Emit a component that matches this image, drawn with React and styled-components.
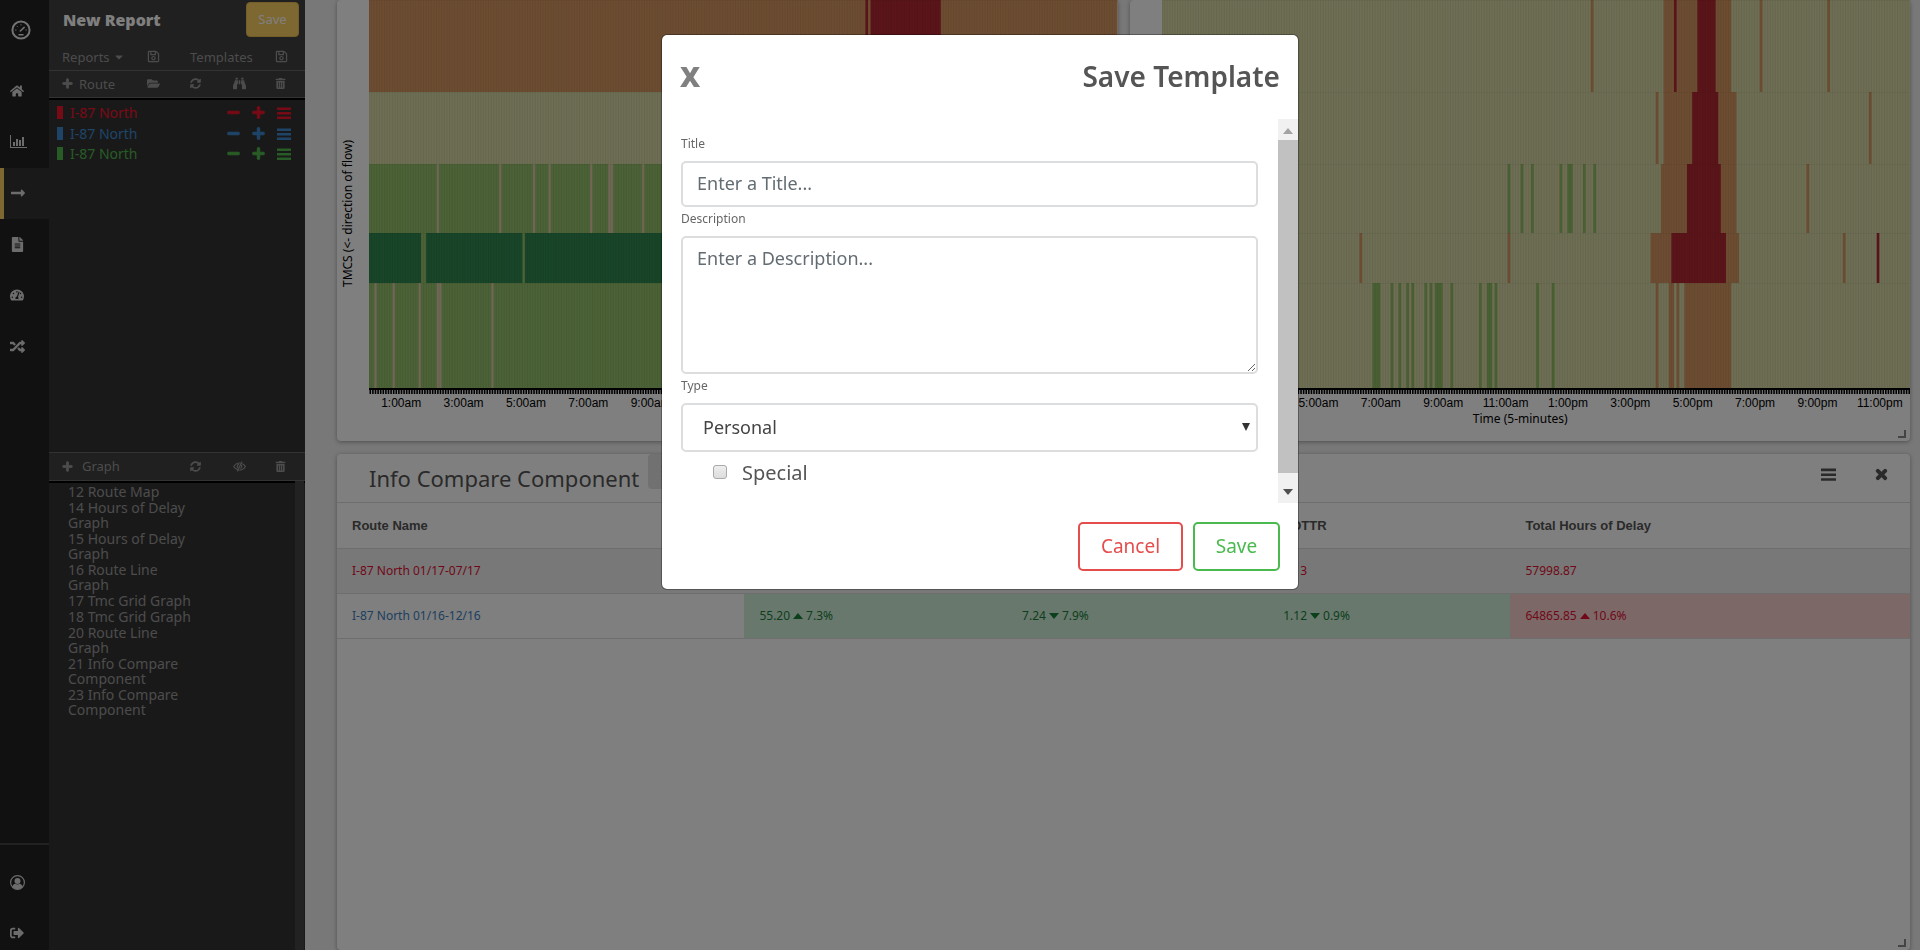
import React from "react";
import styled, { createGlobalStyle } from "styled-components";
import {
  FaBars, FaBinoculars, FaCaretDown, FaFileAlt, FaFolderOpen, FaHome,
  FaLongArrowAltRight, FaMinus, FaPlus, FaRandom, FaRegSave, FaSignOutAlt, FaSyncAlt,
  FaTachometerAlt, FaTimes, FaTrashAlt,
} from "react-icons/fa";

const GlobalStyle = createGlobalStyle`
  *, *::before, *::after { box-sizing: border-box; }
  body {
    margin: 0;
    overflow: hidden;
    font-family: "Noto Sans", "Liberation Sans", sans-serif;
    font-size: 14px;
    color: #555;
    background: #f0f0f0;
  }
  button, input, select, textarea { font-family: inherit; margin: 0; }
  h1, h2, ul, p { margin: 0; padding: 0; }
  svg { display: block; }
`;

const Shell = styled.div`
  display: flex;
  height: 100vh;
`;

/* ---------- icon rail ---------- */

const Rail = styled.nav`
  flex: 0 0 49px;
  display: flex;
  flex-direction: column;
  overflow: hidden;
  background: #222;
`;

const Brand = styled.a`
  flex: 0 0 66px;
  padding: 20px 0 0 11px;
  color: #e6e6e6;
`;

const RailLink = styled.a`
  flex: 0 0 51px;
  display: flex;
  align-items: center;
  padding-bottom: 1px;
  padding-left: ${(p) => (p.$active ? 6 : 10)}px;
  border-left: ${(p) => (p.$active ? "4px solid #f8d060" : "none")};
  background: ${(p) => (p.$active ? "#333" : "transparent")};
  color: #d8d8d8;
  font-size: 14px;
`;

const RailFoot = styled.div`
  flex: 0 0 107px;
  display: flex;
  flex-direction: column;
  min-height: 0;
  margin-top: auto;
  padding-top: 12px;
  border-top: 2px solid #444;
`;

/* ---------- report panel ---------- */

const Panel = styled.aside`
  flex: 0 0 256px;
  display: flex;
  flex-direction: column;
  background: #333;
`;

const PanelHead = styled.header`
  flex: 0 0 44px;
  display: flex;
  align-items: flex-start;
  justify-content: space-between;
  padding: 2px 6px 0 14px;
  background: #404040;
`;

const PanelTitle = styled.h1`
  font-size: 16px;
  line-height: 37px;
  font-weight: 900;
  color: #fff;
`;

const GoldButton = styled.button`
  width: 53px;
  height: 35px;
  padding: 0 0 2px;
  border: 1px solid #e6bd50;
  border-radius: 4px;
  background: #fbd062;
  color: #fff;
  font-size: 13px;
`;

const ToolRow = styled.div`
  flex: 0 0 ${(p) => (p.$tall ? 29 : 27)}px;
  display: grid;
  grid-template-columns: repeat(6, 1fr);
  align-items: center;
  padding-bottom: 1px;
  border-top: ${(p) => (p.$top ? "1px solid #666" : "none")};
  border-bottom: 1px solid #666;
  box-shadow: ${(p) => (p.$last ? "0 2px 0 #000" : "none")};
  background: #404040;
`;

const Tool = styled.button`
  grid-column: ${(p) => p.$col || "auto"};
  display: flex;
  align-items: center;
  gap: ${(p) => p.$gap || 0}px;
  padding: 0 0 0 13px;
  border: 0;
  background: none;
  color: #999;
  font-size: 13px;
  line-height: 20px;
  white-space: nowrap;
`;

const RouteList = styled.ul`
  flex: 0 0 354px;
  padding-top: 4px;
  list-style: none;
`;

const RouteItem = styled.li`
  display: flex;
  align-items: center;
  height: 21px;
  margin-bottom: ${(p) => (p.$tight ? 0 : -1)}px;
  padding: 0 14px 0 8px;
  color: ${(p) => p.$color};
  font-size: 14px;
`;

const Swatch = styled.span`
  width: 6px;
  height: 13px;
  margin-right: 7px;
  background: currentColor;
`;

const RouteName = styled.span`
  flex: 1;
`;

const RouteAction = styled.button`
  margin-left: 12px;
  padding: 0;
  border: 0;
  background: none;
  color: inherit;
  font-size: 13px;
`;

const GraphArea = styled.div`
  flex: 1;
  display: flex;
  justify-content: space-between;
  min-height: 0;
  padding-right: 1px;
`;

const GraphList = styled.ul`
  display: flex;
  flex-direction: column;
  gap: 1px;
  width: 150px;
  padding: 3px 0 0 19px;
  list-style: none;
  font-size: 14px;
  line-height: 15px;
  color: #999;
`;

const GraphTrack = styled.div`
  width: 9px;
  background: #454545;
`;

/* ---------- main area ---------- */

const Main = styled.main`
  flex: 1;
  display: flex;
  flex-direction: column;
  gap: 13px;
  min-width: 0;
  padding: 0 10px 0 32px;
  background: #f0f0f0;
`;

const ChartGrid = styled.div`
  display: grid;
  grid-template-columns: 1fr 1fr;
  gap: 12px;
`;

const Card = styled.section`
  position: relative;
  border-radius: 4px;
  background: #fff;
  box-shadow: 0 1px 4px rgba(0, 0, 0, 0.35);
`;

const ChartCard = styled(Card)`
  display: flex;
  height: 441px;
`;

const AxisTitleY = styled.div`
  flex: 0 0 32px;
  display: flex;
  align-items: flex-start;
  padding: 140px 0 0 2px;
  line-height: 18px;
  font-size: 12px;
  color: #000;

  span {
    writing-mode: vertical-rl;
    rotate: 180deg;
    white-space: nowrap;
  }
`;

const Plot = styled.div`
  flex: 1;
  min-width: 0;
`;

const Heat = styled.svg`
  width: 100%;
  height: 394px;
`;

const TimeLabels = styled.div`
  display: grid;
  grid-template-columns: repeat(12, 1fr);
  margin-right: -1px;
  padding-left: 1px;
  font-family: "Liberation Sans", sans-serif;
  font-size: 12px;
  line-height: 18px;
  color: #000;
  text-align: center;
`;

const AxisTitleX = styled.p`
  padding-right: 31px;
  font-size: 12px;
  line-height: 14px;
  text-align: center;
  color: #000;
`;

const Grip = styled.span`
  position: absolute;
  right: 4px;
  bottom: 3px;
  width: 8px;
  height: 8px;
  border-right: 2px solid #888;
  border-bottom: 2px solid #888;
`;

const InfoCard = styled(Card)`
  flex: 1;
`;

const InfoHead = styled.header`
  display: flex;
  height: 49px;
  padding: 0 21px 0 32px;
  border-bottom: 1px solid #ddd;
`;

const InfoTitle = styled.h2`
  font-size: 22px;
  line-height: 48px;
  font-weight: 400;
  color: #555;
`;

const Badge = styled.button`
  width: 44px;
  height: 35px;
  margin-left: 9px;
  padding: 0 0 0 13px;
  border: 0;
  border-radius: 4px;
  background: #e2e2e2;
  color: #e41a1c;
`;

const HeadActions = styled.div`
  display: flex;
  gap: 38px;
  height: 40px;
  align-items: center;
  margin-left: auto;
`;

const PlainIcon = styled.button`
  padding: 0;
  border: 0;
  background: none;
  color: #555;
  font-size: 15px;
`;

const InfoTable = styled.table`
  width: 100%;
  border-collapse: collapse;
  table-layout: fixed;
  font-size: 12px;
`;

const Th = styled.th`
  width: ${(p) => p.$width};
  height: 45px;
  padding: 0 15px;
  border-bottom: 1px solid #ddd;
  font-family: "Liberation Sans", sans-serif;
  font-size: 13px;
  text-align: left;
  color: #555;
`;

const tones = { good: "#d2f0da", bad: "#fad0d0" };
const inks = { good: "#18803a", bad: "#e01030", red: "#e01030", blue: "#3a80c0" };

const Td = styled.td`
  height: 45px;
  padding: 0 15px;
  border-bottom: 1px solid #ddd;
  background: ${(p) => tones[p.$tone] || (p.$shade ? "#f0f0f0" : "transparent")};
  color: ${(p) => inks[p.$ink]};
`;

const Change = styled.span`
  display: inline-flex;
  align-items: center;
  gap: 3px;
`;

/* ---------- dialog ---------- */

const Backdrop = styled.div`
  position: fixed;
  inset: 0;
  padding-top: 34px;
  padding-left: 40px;
  background: rgba(0, 0, 0, 0.5);
`;

const Dialog = styled.form`
  width: 100%;
  max-width: 638px;
  margin: 0 auto;
  border: 1px solid rgba(0, 0, 0, 0.3);
  border-radius: 6px;
  background: #fff;
  background-clip: padding-box;
`;

const DialogHead = styled.header`
  display: flex;
  justify-content: space-between;
  align-items: center;
  height: 84px;
  padding: 0 18px 2px;
`;

const CloseButton = styled.button`
  padding: 0;
  border: 0;
  background: none;
  color: #808080;
  font-size: 28px;
  line-height: 36px;
  font-weight: 900;
`;

const DialogTitle = styled.h2`
  font-size: 28px;
  line-height: 40px;
  font-weight: 600;
  color: #555;
`;

const DialogBody = styled.div`
  display: flex;
  height: 384px;
`;

const Fields = styled.div`
  flex: 1;
  padding: 13px 20px 0 19px;
`;

const FieldLabel = styled.label`
  display: block;
  font-size: 12px;
  line-height: 24px;
  padding-bottom: 5px;
  color: #666;
`;

const control = `
  display: block;
  width: 100%;
  border: 2px solid #dcdddf;
  border-radius: 5px;
  background: #fff;
  color: #444;
  font-size: 18px;
`;

const TextInput = styled.input`
  ${control}
  height: 46px;
  padding: 0 14px 2px;
  &::placeholder { color: #636c72; opacity: 1; }
`;

const TextArea = styled.textarea`
  ${control}
  height: 138px;
  padding: 7px 14px;
  line-height: 26px;
  resize: vertical;
  &::placeholder { color: #636c72; opacity: 1; }
`;

const SelectWrap = styled.div`
  position: relative;

  &::after {
    content: "";
    position: absolute;
    right: 8px;
    top: 20px;
    border: 4px solid transparent;
    border-top: 8px solid #333;
    border-bottom: 0;
    pointer-events: none;
  }
`;

const Select = styled.select`
  ${control}
  height: 49px;
  padding: 0 20px 2px;
  appearance: none;
`;

const CheckRow = styled.label`
  display: flex;
  align-items: center;
  gap: 15px;
  height: 40px;
  padding-left: 32px;
  font-size: 20px;
  color: #555;
`;

const CheckBox = styled.input`
  width: 14px;
  height: 14px;
  appearance: none;
  border: 1px solid #aaa;
  border-radius: 3px;
  background: linear-gradient(#eee, #ddd);
`;

const ScrollTrack = styled.div`
  flex: 0 0 20px;
  display: flex;
  flex-direction: column;
  background: #f1f1f1;
`;

const ScrollArrow = styled.span`
  flex: 0 0 ${(p) => (p.$down ? 30 : 21)}px;
  display: grid;
  place-items: center;
  padding-top: ${(p) => (p.$down ? 8 : 2)}px;
  color: ${(p) => (p.$down ? "#505050" : "#a3a3a3")};
`;

const ScrollThumb = styled.div`
  flex: 1;
  background: #c1c1c1;
`;

const DialogFoot = styled.footer`
  display: flex;
  justify-content: flex-end;
  gap: 10px;
  padding: 19px 18px 18px;
`;

const OutlineButton = styled.button`
  height: 49px;
  width: ${(p) => p.$width}px;
  padding: 0 0 2px;
  border: 2px solid ${(p) => p.$color};
  border-radius: 5px;
  background: #fff;
  color: ${(p) => p.$color};
  font-size: 19px;
`;

/* ---------- drawings ---------- */

const bold = (Icon) => styled(Icon)`
  overflow: visible;
  stroke: currentColor;
  stroke-width: 40px;
`;
const BoldPlus = bold(FaPlus);
const BoldMinus = bold(FaMinus);
const BoldTimes = bold(FaTimes);

const MenuIcon = ({ size = 14 }) => (
  <svg width={size} height={size - 2} viewBox="0 0 14 12" fill="currentColor">
    <path d="M0 0.5h14v2.4H0zM0 5h14v2.4H0zM0 9.5h14v2.4H0z" />
  </svg>
);

const GaugeIcon = () => (
  <svg width="20" height="20" viewBox="0 0 20 20" fill="none" stroke="currentColor" strokeLinecap="round">
    <circle cx="10" cy="10" r="8.6" strokeWidth="2" />
    <path d="M9.3 11 L13.2 7.4" strokeWidth="1.5" />
    <path d="M8 14.7 H12" strokeWidth="1.5" />
    <path d="M4.6 10 H5 M6.2 6.4 L6.4 6.6 M10 4.7 V5 M15 10 H15.4" strokeWidth="1" />
  </svg>
);

const BarsIcon = () => (
  <svg width="17" height="14" viewBox="0 0 17 14" fill="currentColor">
    <path d="M0 0h1v12h16v1H0z" />
    <path d="M3 7h2v4H3zM6 4h2v7H6zM9 5h2v6H9zM12 2h2v9h-2z" />
  </svg>
);

const UserIcon = () => (
  <svg width="15" height="15" viewBox="0 0 15 15">
    <circle cx="7.5" cy="7.5" r="6.9" fill="none" stroke="currentColor" strokeWidth="1.2" />
    <circle cx="7.5" cy="6" r="3" fill="currentColor" />
    <path d="M2.2 12 C2.8 9.6 4.2 8.8 5.5 8.7 C6.8 9.6 8.2 9.6 9.5 8.7 C10.8 8.8 12.2 9.6 12.8 12 C9.8 15 5.2 15 2.2 12z" fill="currentColor" />
  </svg>
);

const EyeIcon = () => (
  <svg width="13" height="11" viewBox="0 0 13 11" fill="none" stroke="currentColor" strokeWidth="1.2" strokeLinecap="round">
    <path d="M5.2 9 C3 8.5 1.6 7 .7 5.5 C2 3.4 4 2 6.5 2 H7.2" />
    <path d="M9.8 2.9 C11 3.6 11.8 4.5 12.3 5.5 C11.2 7.6 9.2 9 6.8 9.1" />
    <path d="M8.8 1 L4.6 10" />
    <path d="M4.6 6.7 C3.8 5.4 4.4 3.9 5.6 3.4 M8.6 4.3 C9 5.6 8.6 6.6 7.8 7.2" />
  </svg>
);

const Triangle = ({ down, size = 10 }) => (
  <svg width={size} height="6" viewBox="0 0 10 6" fill="currentColor">
    <path d={down ? "M0 0H10L5 6z" : "M0 6H10L5 0z"} />
  </svg>
);

const C = { orange: "#da9b65", light: "#dcdda9", green: "#98c46e", moss: "#94c268", deep: "#328b52", red: "#b62a34", tan: "#dcd0a8" };
const bands = [[0, 92], [92, 72], [164, 69], [233, 50], [283, 105]];

/* each cell is one five-minute slot: [first slot, slot count, colour] */
const leftMap = [
  { base: C.orange, cells: [[191, 1, C.red], [193, 27, C.red]] },
  { base: C.light, cells: [] },
  { base: C.green, cells: [[26, 1, C.tan], [50, 1, C.tan], [63, 1, C.tan], [69, 1, C.tan], [85, 1, C.tan], [92, 2, C.tan], [105, 1, C.tan]] },
  { base: C.deep, cells: [[20, 2, C.green], [59, 1, C.green]] },
  { base: C.green, cells: [[2, 1, C.tan], [9, 1, C.tan], [19, 1, C.tan], [26, 2, C.tan], [47, 1, C.tan]] },
];

const rightMap = [
  { base: C.light, cells: [[165, 1, C.orange], [193, 26, C.orange], [197, 1, C.red], [206, 7, C.red], [230, 1, C.orange], [256, 1, C.orange]] },
  { base: C.light, cells: [[190, 1, C.orange], [193, 28, C.orange], [204, 10, C.red], [272, 1, C.orange]] },
  { base: C.light, cells: [[133, 1, C.moss], [138, 1, C.moss], [142, 1, C.moss], [153, 1, C.moss], [156, 2, C.moss], [162, 1, C.moss], [166, 1, C.moss], [192, 29, C.orange], [202, 13, C.red], [248, 1, C.orange]] },
  { base: C.light, cells: [[76, 1, C.orange], [133, 1, C.orange], [188, 34, C.orange], [196, 21, C.red], [262, 1, C.orange], [275, 1, C.red]] },
  {
    base: C.light,
    cells: [
      [81, 3, C.moss], [88, 1, C.moss], [91, 1, C.moss], [94, 1, C.moss], [96, 1, C.moss], [101, 1, C.moss], [103, 1, C.moss],
      [105, 3, C.moss], [111, 1, C.moss], [122, 1, C.moss], [125, 2, C.moss], [128, 1, C.moss], [144, 1, C.moss], [150, 1, C.moss],
      [190, 1, C.orange], [195, 2, C.orange], [198, 1, C.orange], [201, 18, C.orange],
    ],
  },
];

const times = ["1:00am", "3:00am", "5:00am", "7:00am", "9:00am", "11:00am", "1:00pm", "3:00pm", "5:00pm", "7:00pm", "9:00pm", "11:00pm"];

const slotLines = Array.from({ length: 288 }, (_, i) => `M${i} 0V388`).join("");
const tickLines = Array.from({ length: 288 }, (_, i) => `M${i + 0.5} 390V394`).join("");

const HeatChart = ({ map }) => (
  <ChartCard>
    <AxisTitleY><span>TMCS (&lt;- direction of flow)</span></AxisTitleY>
    <Plot>
      <Heat viewBox="0 0 288 394" preserveAspectRatio="none" role="img" aria-label="Speed by segment and time of day">
        {map.map((row, r) => (
          <g key={r}>
            <rect x="0" y={bands[r][0]} width="288" height={bands[r][1]} fill={row.base} />
            {row.cells.map(([at, n, fill]) => (
              <rect key={`${at}-${fill}`} x={at} y={bands[r][0]} width={n} height={bands[r][1]} fill={fill} />
            ))}
            <rect x="0" y={bands[r][0]} width="288" height="1" fill="#000" opacity="0.04" />
          </g>
        ))}
        <path d={slotLines} stroke="#000" strokeWidth="0.4" opacity="0.06" />
        <rect x="0" y="388" width="288" height="2" fill="#000" />
        <path d={tickLines} stroke="#000" strokeWidth="0.6" />
      </Heat>
      <TimeLabels>{times.map((t) => <span key={t}>{t}</span>)}</TimeLabels>
      <AxisTitleX>Time (5-minutes)</AxisTitleX>
    </Plot>
    <Grip />
  </ChartCard>
);

const routes = [
  { id: 1, name: "I-87 North", color: "#f0142c" },
  { id: 2, name: "I-87 North", color: "#3c8ad0" },
  { id: 3, name: "I-87 North", color: "#50b84c" },
];

const graphs = [
  "12 Route Map", "14 Hours of Delay Graph", "15 Hours of Delay Graph", "16 Route Line Graph", "17 Tmc Grid Graph",
  "18 Tmc Grid Graph", "20 Route Line Graph", "21 Info Compare Component", "23 Info Compare Component",
];

const Delta = ({ value, change, down }) => (
  <Change>{value} <Triangle down={down} /> {change}</Change>
);

export default function App() {
  return (
    <>
      <GlobalStyle />
      <Shell>
        <Rail aria-label="Main">
          <Brand href="#home" aria-label="Dashboard"><GaugeIcon /></Brand>
          <RailLink href="#overview" aria-label="Home"><FaHome /></RailLink>
          <RailLink href="#stats" aria-label="Statistics"><BarsIcon /></RailLink>
          <RailLink href="#routes" aria-label="Routes" $active><FaLongArrowAltRight size={16} /></RailLink>
          <RailLink href="#reports" aria-label="Reports"><FaFileAlt size={15} /></RailLink>
          <RailLink href="#speed" aria-label="Speed"><FaTachometerAlt /></RailLink>
          <RailLink href="#compare" aria-label="Compare"><FaRandom size={15} /></RailLink>
          <RailFoot>
            <RailLink href="#account" aria-label="Account"><UserIcon /></RailLink>
            <RailLink href="#logout" aria-label="Log out"><FaSignOutAlt /></RailLink>
          </RailFoot>
        </Rail>

        <Panel>
          <PanelHead>
            <PanelTitle>New Report</PanelTitle>
            <GoldButton type="button">Save</GoldButton>
          </PanelHead>
          <ToolRow>
            <Tool $col="1 / 3" $gap={3}>Reports <FaCaretDown size={12} /></Tool>
            <Tool $col="3" aria-label="Save report"><FaRegSave /></Tool>
            <Tool $col="4 / 6">Templates</Tool>
            <Tool $col="6" aria-label="Save template"><FaRegSave /></Tool>
          </ToolRow>
          <ToolRow $last>
            <Tool $col="1 / 3" $gap={6}><BoldPlus size={11} /> Route</Tool>
            <Tool $col="3" aria-label="Open"><FaFolderOpen /></Tool>
            <Tool aria-label="Refresh routes"><FaSyncAlt size={11} /></Tool>
            <Tool aria-label="Find"><FaBinoculars /></Tool>
            <Tool aria-label="Delete routes"><FaTrashAlt size={11} /></Tool>
          </ToolRow>
          <RouteList>
            {routes.map((r) => (
              <RouteItem key={r.id} $color={r.color} $tight={r.id === 1}>
                <Swatch />
                <RouteName>{r.name}</RouteName>
                <RouteAction aria-label="Remove"><BoldMinus /></RouteAction>
                <RouteAction aria-label="Add"><BoldPlus /></RouteAction>
                <RouteAction aria-label="Options"><MenuIcon /></RouteAction>
              </RouteItem>
            ))}
          </RouteList>
          <ToolRow $last $top $tall>
            <Tool $col="1 / 3" $gap={9}><BoldPlus size={11} /> Graph</Tool>
            <Tool $col="4" aria-label="Refresh graphs"><FaSyncAlt size={11} /></Tool>
            <Tool aria-label="Hide graphs"><EyeIcon /></Tool>
            <Tool aria-label="Delete graphs"><FaTrashAlt size={11} /></Tool>
          </ToolRow>
          <GraphArea>
            <GraphList>{graphs.map((g) => <li key={g}>{g}</li>)}</GraphList>
            <GraphTrack />
          </GraphArea>
        </Panel>

        <Main>
          <ChartGrid>
            <HeatChart map={leftMap} />
            <HeatChart map={rightMap} />
          </ChartGrid>
          <InfoCard>
            <InfoHead>
              <InfoTitle>Info Compare Component</InfoTitle>
              <Badge type="button" aria-label="Routes shown"><FaBars /></Badge>
              <HeadActions>
                <PlainIcon aria-label="Menu"><MenuIcon size={15} /></PlainIcon>
                <PlainIcon aria-label="Close"><BoldTimes /></PlainIcon>
              </HeadActions>
            </InfoHead>
            <InfoTable>
              <thead>
                <tr>
                  <Th $width="25.9%">Route Name</Th>
                  <Th $width="16.7%">Speed</Th>
                  <Th $width="16.6%">Travel Time</Th>
                  <Th $width="15.4%">LOTTR</Th>
                  <Th>Total Hours of Delay</Th>
                </tr>
              </thead>
              <tbody>
                <tr>
                  <Td $shade $ink="red">I-87 North 01/17-07/17</Td>
                  <Td $shade $ink="red">51.45</Td>
                  <Td $shade $ink="red">7.86</Td>
                  <Td $shade $ink="red">1.13</Td>
                  <Td $shade $ink="red">57998.87</Td>
                </tr>
                <tr>
                  <Td $ink="blue">I-87 North 01/16-12/16</Td>
                  <Td $tone="good" $ink="good"><Delta value="55.20" change="7.3%" /></Td>
                  <Td $tone="good" $ink="good"><Delta value="7.24" change="7.9%" down /></Td>
                  <Td $tone="good" $ink="good"><Delta value="1.12" change="0.9%" down /></Td>
                  <Td $tone="bad" $ink="bad"><Delta value="64865.85" change="10.6%" /></Td>
                </tr>
              </tbody>
            </InfoTable>
            <Grip />
          </InfoCard>
        </Main>
      </Shell>

      <Backdrop>
        <Dialog role="dialog" aria-labelledby="dialog-title" onSubmit={(e) => e.preventDefault()}>
          <DialogHead>
            <CloseButton type="button" aria-label="Close dialog">X</CloseButton>
            <DialogTitle id="dialog-title">Save Template</DialogTitle>
          </DialogHead>
          <DialogBody>
            <Fields>
              <FieldLabel htmlFor="title">Title</FieldLabel>
              <TextInput id="title" placeholder="Enter a Title..." />
              <FieldLabel htmlFor="description">Description</FieldLabel>
              <TextArea id="description" placeholder="Enter a Description..." />
              <FieldLabel htmlFor="type">Type</FieldLabel>
              <SelectWrap>
                <Select id="type" defaultValue="Personal">
                  <option>Personal</option>
                </Select>
              </SelectWrap>
              <CheckRow htmlFor="special"><CheckBox id="special" type="checkbox" />Special</CheckRow>
            </Fields>
            <ScrollTrack aria-hidden="true">
              <ScrollArrow><Triangle /></ScrollArrow>
              <ScrollThumb />
              <ScrollArrow $down><Triangle down /></ScrollArrow>
            </ScrollTrack>
          </DialogBody>
          <DialogFoot>
            <OutlineButton type="button" $width={105} $color="#e54d4d">Cancel</OutlineButton>
            <OutlineButton type="submit" $width={87} $color="#4ab94e">Save</OutlineButton>
          </DialogFoot>
        </Dialog>
      </Backdrop>
    </>
  );
}
